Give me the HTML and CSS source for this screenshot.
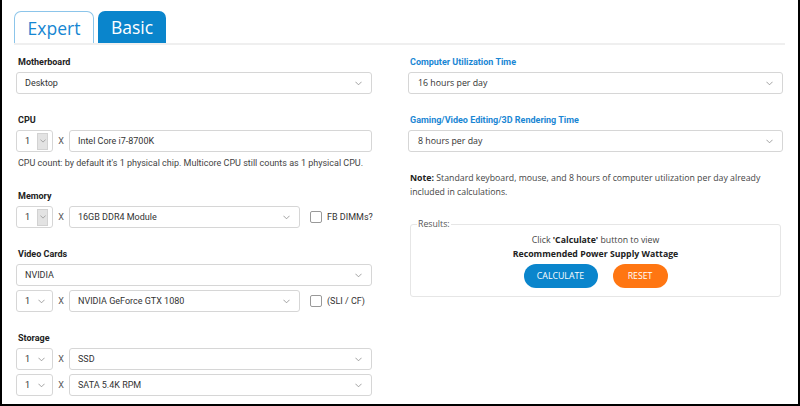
FILE: index.html
```html
<!DOCTYPE html>
<html>
<head>
<meta charset="utf-8">
<link rel="stylesheet" href="styles.css">
</head>
<body>
<div class="frame">
  <div class="tabs">
    <div class="tab tab-expert">Expert</div>
    <div class="tab tab-basic">Basic</div>
  </div>
  <div class="main">
    <div class="col col-left">
      <div class="group first">
        <div class="label">Motherboard</div>
        <div class="sel"><span>Desktop</span><svg class="chev" viewBox="0 0 8 5"><path d="M0.5 0.5 L4 4 L7.5 0.5"/></svg></div>
      </div>
      <div class="group">
        <div class="label">CPU</div>
        <div class="row">
          <div class="sel sel-qty"><span>1</span><span class="arrowbox"><svg class="chev" viewBox="0 0 8 5"><path d="M0.5 0.5 L4 4 L7.5 0.5"/></svg></span></div>
          <span class="times">X</span>
          <div class="input grow">Intel Core i7-8700K</div>
        </div>
        <div class="help">CPU count: by default it's 1 physical chip. Multicore CPU still counts as 1 physical CPU.</div>
      </div>
      <div class="group">
        <div class="label">Memory</div>
        <div class="row">
          <div class="sel sel-qty"><span>1</span><span class="arrowbox"><svg class="chev" viewBox="0 0 8 5"><path d="M0.5 0.5 L4 4 L7.5 0.5"/></svg></span></div>
          <span class="times">X</span>
          <div class="sel sel-mid"><span>16GB DDR4 Module</span><svg class="chev" viewBox="0 0 8 5"><path d="M0.5 0.5 L4 4 L7.5 0.5"/></svg></div>
          <span class="check"></span>
          <span class="check-label">FB DIMMs?</span>
        </div>
      </div>
      <div class="group">
        <div class="label">Video Cards</div>
        <div class="sel"><span>NVIDIA</span><svg class="chev" viewBox="0 0 8 5"><path d="M0.5 0.5 L4 4 L7.5 0.5"/></svg></div>
        <div class="row gap-top">
          <div class="sel sel-qty"><span>1</span><svg class="chev" viewBox="0 0 8 5"><path d="M0.5 0.5 L4 4 L7.5 0.5"/></svg></div>
          <span class="times">X</span>
          <div class="sel sel-mid"><span>NVIDIA GeForce GTX 1080</span><svg class="chev" viewBox="0 0 8 5"><path d="M0.5 0.5 L4 4 L7.5 0.5"/></svg></div>
          <span class="check"></span>
          <span class="check-label">(SLI / CF)</span>
        </div>
      </div>
      <div class="group">
        <div class="label">Storage</div>
        <div class="row">
          <div class="sel sel-qty"><span>1</span><svg class="chev" viewBox="0 0 8 5"><path d="M0.5 0.5 L4 4 L7.5 0.5"/></svg></div>
          <span class="times">X</span>
          <div class="sel grow"><span>SSD</span><svg class="chev" viewBox="0 0 8 5"><path d="M0.5 0.5 L4 4 L7.5 0.5"/></svg></div>
        </div>
        <div class="row gap-top">
          <div class="sel sel-qty"><span>1</span><svg class="chev" viewBox="0 0 8 5"><path d="M0.5 0.5 L4 4 L7.5 0.5"/></svg></div>
          <span class="times">X</span>
          <div class="sel grow"><span>SATA 5.4K RPM</span><svg class="chev" viewBox="0 0 8 5"><path d="M0.5 0.5 L4 4 L7.5 0.5"/></svg></div>
        </div>
      </div>
    </div>
    <div class="col col-right">
      <div class="group first">
        <div class="label label-blue">Computer Utilization Time</div>
        <div class="sel sel-r"><span>16 hours per day</span><svg class="chev" viewBox="0 0 8 5"><path d="M0.5 0.5 L4 4 L7.5 0.5"/></svg></div>
      </div>
      <div class="group">
        <div class="label label-blue">Gaming/Video Editing/3D Rendering Time</div>
        <div class="sel sel-r"><span>8 hours per day</span><svg class="chev" viewBox="0 0 8 5"><path d="M0.5 0.5 L4 4 L7.5 0.5"/></svg></div>
      </div>
      <p class="note"><b>Note: </b>Standard keyboard, mouse, and 8 hours of computer utilization per day already included in calculations.</p>
      <fieldset class="results">
        <legend>Results:</legend>
        <div class="res-line">Click <b>'Calculate'</b> button to view</div>
        <div class="res-line res-bold">Recommended Power Supply Wattage</div>
        <div class="buttons">
          <button class="btn btn-calc">CALCULATE</button>
          <button class="btn btn-reset">RESET</button>
        </div>
      </fieldset>
    </div>
  </div>
</div>
</body>
</html>
```
FILE: styles.css
```css
html, body {
  margin: 0;
  padding: 0;
  background: #fff;
}
.frame {
  box-sizing: border-box;
  width: 800px;
  height: 406px;
  border: 2px solid #000;
  border-top: 0;
  font-family: Roboto, "Liberation Sans", sans-serif;
  color: #333;
  overflow: hidden;
}
.tabs {
  display: flex;
  gap: 4px;
  margin: 0 13px 0 12px;
  padding-top: 11px;
  border-bottom: 2px solid #efefef;
}
.tab {
  box-sizing: border-box;
  height: 32px;
  display: flex;
  align-items: center;
  justify-content: center;
  font-family: "Open Sans", sans-serif;
  font-size: 17.5px;
  border-radius: 7px 7px 0 0;
}
.tab-expert {
  width: 80px;
  border: 1px solid #8cc5ea;
  border-bottom: 0;
  color: #1686d2;
  background: #fff;
}
.tab-basic {
  width: 68px;
  background: #0a85cc;
  color: #fff;
}
.main {
  display: grid;
  grid-template-columns: 356px 375px;
  column-gap: 36px;
  padding-left: 14px;
}
.col {
  min-width: 0;
}
.group {
  margin-top: 20px;
}
.group.first {
  margin-top: 11px;
}
.label {
  font-size: 9px;
  font-weight: 700;
  line-height: 12px;
  color: #222;
  margin: 0 0 4px 2px;
}
.label-blue {
  color: #1a87d4;
}
.row {
  display: flex;
  align-items: center;
  white-space: nowrap;
}
.gap-top {
  margin-top: 4px;
}
.sel, .input {
  box-sizing: border-box;
  height: 22px;
  border: 1px solid #d6d6d6;
  border-radius: 3px;
  background: #fff;
  font-size: 9px;
  color: #333;
  display: flex;
  align-items: center;
  justify-content: space-between;
  padding: 0 9px 0 8px;
  white-space: nowrap;
}
.sel-r {
  font-family: "Open Sans", sans-serif;
  font-size: 8.8px;
  padding-left: 9px;
  padding-right: 9px;
}
.grow {
  flex: 1;
}
.sel-qty {
  flex: none;
  width: 37px;
  padding: 0 7px 0 8px;
}
.sel-mid {
  flex: none;
  width: 231px;
}
.chev {
  width: 7px;
  height: 5px;
  fill: none;
  stroke: #8a8a8a;
  stroke-width: 0.9;
}
.arrowbox {
  box-sizing: border-box;
  width: 11px;
  height: 17px;
  margin-right: -3px;
  background: #e3e3e3;
  border: 1px solid #d2d2d2;
  display: flex;
  align-items: center;
  justify-content: center;
}
.arrowbox .chev {
  width: 6px;
  height: 4px;
}
.times {
  flex: none;
  width: 16px;
  text-align: center;
  font-size: 9px;
  color: #555;
}
.check {
  flex: none;
  box-sizing: border-box;
  width: 12px;
  height: 12px;
  margin-left: 10px;
  border: 1px solid #999;
  border-radius: 2px;
  background: #fff;
}
.check-label {
  flex: none;
  margin-left: 5px;
  font-size: 9px;
  color: #333;
}
.help {
  margin: 4px 0 0 2px;
  font-size: 9px;
  line-height: 14px;
  color: #444;
}
.note {
  margin: 19px 0 0 2px;
  font-family: "Open Sans", sans-serif;
  font-size: 8.75px;
  line-height: 14px;
  color: #444;
}
.note b {
  color: #222;
}
.results {
  margin: 19px 2px 0 2px;
  padding: 3px 8px 8px;
  border: 1px solid #e6e6e6;
  border-radius: 3px;
  font-family: "Open Sans", sans-serif;
  text-align: center;
  color: #444;
}
.results legend {
  text-align: left;
  font-size: 8.75px;
  line-height: 12px;
  padding: 0 1px;
  margin-left: -2px;
  color: #555;
}
.res-line {
  font-size: 8.75px;
  line-height: 14px;
}
.res-line b, .res-bold {
  font-weight: 700;
  color: #222;
}
.buttons {
  display: flex;
  justify-content: center;
  gap: 15px;
  margin-top: 3px;
}
.btn {
  height: 24px;
  border: 0;
  border-radius: 12px;
  color: #fff;
  font-family: "Open Sans", sans-serif;
  font-size: 8.75px;
  padding: 0;
}
.btn-calc {
  width: 74px;
  background: #0a85cc;
}
.btn-reset {
  width: 55px;
  background: #ff7612;
}
```
